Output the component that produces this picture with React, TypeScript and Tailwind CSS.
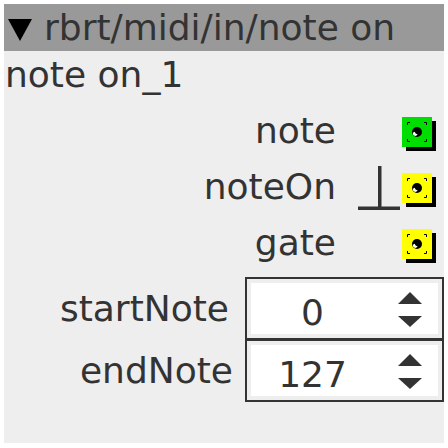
import React from "react";

const font = { fontFamily: '"DejaVu Sans", sans-serif' };

function Port({ color }: { color: string }) {
  return (
    <div className={`w-[30px] h-[30px] shadow-[4px_4px_0_#000] ${color}`}>
      <svg width="30" height="30" viewBox="0 0 30 30">
        <g stroke="#000" strokeWidth="1" fill="none">
          <path d="M5.5 8 V5.5 H8" />
          <path d="M22 5.5 H24.5 V8" />
          <path d="M5.5 22 V24.5 H8" />
          <path d="M22 24.5 H24.5 V22" />
        </g>
        <circle cx="15" cy="15" r="5" fill="#000" />
        <ellipse cx="13.2" cy="16.8" rx="2.4" ry="2.1" fill="#fff" />
        <circle cx="15.6" cy="14.4" r="2.6" fill="#000" />
      </svg>
    </div>
  );
}

function PortRow({
  label,
  color,
  tee,
}: {
  label: string;
  color: string;
  tee?: boolean;
}) {
  return (
    <div className="h-[56px] flex items-center justify-end pr-[12px]">
      <span className="leading-[42px] -mt-[3px]">{label}</span>
      <div className="w-[66px] h-[46px] flex items-center">
        {tee && (
          <svg width="42" height="46" viewBox="0 0 42 46" className="ml-[22px]">
            <rect x="20" y="1" width="3.5" height="44" fill="#333" />
            <rect x="0" y="41.5" width="42" height="3.5" fill="#333" />
          </svg>
        )}
      </div>
      <Port color={color} />
    </div>
  );
}

function Spin({ label, value, pr, extra }: { label: string; value: string; pr: string; extra?: string }) {
  return (
    <div className={`flex h-[63px] ${extra ?? ""}`}>
      <div className={`flex-1 flex items-center justify-end ${pr}`}>
        <span className="leading-[42px]">{label}</span>
      </div>
      <div className="w-[199px] h-[63px] border-2 border-[#333] bg-[#eeeeee] p-[4px]">
        <div className="w-full h-full bg-white flex">
          <div className="flex-1 flex items-center justify-center pt-[8px] pr-[8px]">
            <span className="leading-[42px]">{value}</span>
          </div>
          <div className="w-[56px] flex flex-col items-center justify-center gap-[12px] pt-[2px]">
            <svg width="24" height="12" viewBox="0 0 24 12">
              <polygon points="12,0 24,12 0,12" fill="#333" />
            </svg>
            <svg width="24" height="11" viewBox="0 0 24 11">
              <polygon points="0,0 24,0 12,11" fill="#333" />
            </svg>
          </div>
        </div>
      </div>
    </div>
  );
}

export default function App() {
  return (
    <div className="w-[448px] h-[448px] bg-white pt-[4px] pl-[4px]" style={font}>
      <div className="w-[440px] h-[439px] bg-[#eeeeee] text-[#333333] text-[36px] flex flex-col">
        <div className="h-[47px] bg-[#999999] flex items-center">
          <svg width="24" height="22" viewBox="0 0 24 22" className="ml-[4px] mt-[4px]">
            <polygon points="0,0 24,0 12,22" fill="#000" />
          </svg>
          <span className="ml-[12px] leading-[47px]">rbrt/midi/in/note on</span>
        </div>
        <div className="h-[47px] leading-[47px] pl-[1px]">note on_1</div>
        <div className="h-[6px]" />
        <PortRow label="note" color="bg-[#00dd00]" />
        <PortRow label="noteOn" color="bg-[#ffff00]" tee />
        <PortRow label="gate" color="bg-[#ffff00]" />
        <div className="h-[5px]" />
        <Spin label="startNote" value="0" pr="pr-[16px]" />
        <Spin label="endNote" value="127" pr="pr-[12px]" extra="-mt-[1px]" />
      </div>
    </div>
  );
}
